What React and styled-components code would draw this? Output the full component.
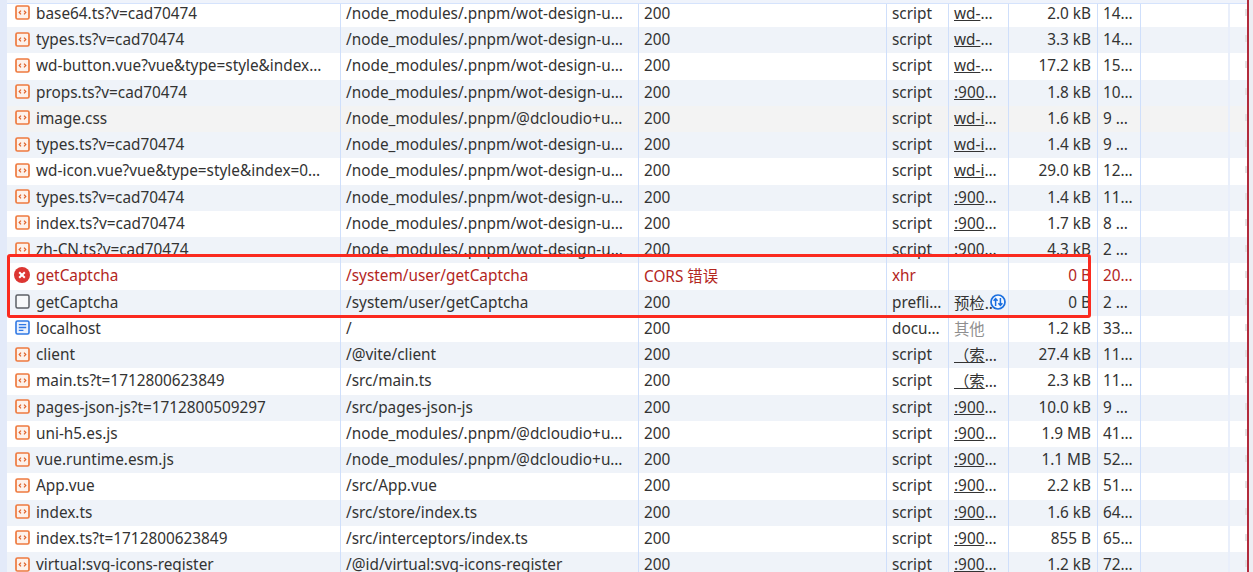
import React from "react";
import styled, { createGlobalStyle } from "styled-components";

const Global = createGlobalStyle`
  html, body { margin: 0; padding: 0; background: #fff; height: 100%; overflow: hidden; }
  #root { height: 100%; }
`;

const Page = styled.div`
  position: relative;
  width: 1253px;
  height: 572px;
  overflow: hidden;
  display: flex;
  background: #ededf2;
  font-family: "Noto Sans", "Noto Sans CJK SC", sans-serif;
  font-size: 15.35px;
  color: #333;
`;
const LeftGutter = styled.div`
  flex: 0 0 7px;
  background: #e3eaf9;
`;
const Panel = styled.div`
  flex: 0 0 1240px;
  min-width: 0;
`;
const HeaderEdge = styled.div`
  position: relative;
  z-index: 1;
  height: 3px;
  margin-bottom: -3.25px;
  background: #eff3fb;
  border-bottom: 1px solid #d5e3fc;
`;
const Row = styled.div`
  display: grid;
  grid-template-columns: 334px 298px 248px 62px 60px 89px 43px 89px 17px;
  height: 26.25px;
  background: ${(p) => (p.$hover ? "#f3f3f3" : p.$stripe ? "#eff3f9" : "#fff")};
  color: ${(p) => (p.$error ? "#b3261e" : "#333")};
`;
const Cell = styled.div`
  position: relative;
  display: flex;
  align-items: center;
  justify-content: ${(p) => (p.$right ? "flex-end" : "flex-start")};
  padding: 0 ${(p) => (p.$right ? "6px" : "3px")} 2px 5px;
  border-right: 1px solid #cfdffb;
  white-space: nowrap;
  overflow: hidden;
  min-width: 0;
`;
const NameCell = styled(Cell)`
  padding-left: 8px;
  gap: 6px;
`;
const Waterfall = styled.div`
  border-right: 2px solid #e9effb;
`;
const EdgeCell = styled.div`
  position: relative;
  &::after {
    content: "";
    position: absolute;
    right: 0;
    top: 8px;
    width: 2px;
    height: 7px;
    background: #e2e2e4;
  }
`;
const RedEdge = styled.div`
  flex: 0 0 2px;
  background: #b32b3c;
`;
const Link = styled.span`
  text-decoration: underline;
`;
const Muted = styled.span`
  color: #8f8f8f;
`;
const InitiatorIcon = styled.svg`
  position: absolute;
  left: 41px;
  top: 4px;
`;
const Highlight = styled.div`
  position: absolute;
  left: 7px;
  top: 254px;
  width: 1084px;
  height: 64px;
  box-sizing: border-box;
  border: 3px solid #fb2a1f;
  border-radius: 3px;
  pointer-events: none;
  z-index: 2;
`;

const ScriptIcon = () => (
  <svg width="15" height="15" viewBox="0 0 15 15" style={{ flex: "none" }}>
    <rect x="1" y="1" width="13" height="13" rx="1.5" fill="#fdf1ea" stroke="#ee7a3f" strokeWidth="1.7" />
    <path d="M6 5.6 4.2 7.5 6 9.4M9 5.6l1.8 1.9L9 9.4" fill="none" stroke="#e0622a" strokeWidth="1.2" />
  </svg>
);
const DocIcon = () => (
  <svg width="15" height="15" viewBox="0 0 15 15" style={{ flex: "none" }}>
    <rect x="1" y="1" width="13" height="13" rx="1.5" fill="#eaf1fe" stroke="#2f78e4" strokeWidth="1.6" />
    <path d="M3.8 4.6h7.4M3.8 7.5h7.4M3.8 10.4h4.6" stroke="#2f78e4" strokeWidth="1.4" />
  </svg>
);
const ErrorIcon = () => (
  <svg width="16" height="16" viewBox="0 0 16 16" style={{ flex: "none", marginLeft: -1, marginRight: 0 }}>
    <circle cx="8" cy="8" r="8" fill="#dc3632" />
    <path d="M5.2 5.2l5.6 5.6M10.8 5.2l-5.6 5.6" stroke="#fff" strokeWidth="2" />
  </svg>
);
const BoxIcon = () => (
  <svg width="15" height="15" viewBox="0 0 15 15" style={{ flex: "none" }}>
    <rect x="1" y="1" width="13" height="13" rx="1.5" fill="#f7f8fa" stroke="#5c5f66" strokeWidth="1.5" />
  </svg>
);
const PreflightIcon = () => (
  <InitiatorIcon width="16" height="16" viewBox="0 0 16 16">
    <circle cx="8" cy="8" r="7" fill="#f4f8ff" stroke="#1a6fe0" strokeWidth="1.7" />
    <path d="M5.6 12V5M3.6 6.8l2-2.2 2 2.2M10.4 4v7M8.4 9.2l2 2.2 2-2.2" fill="none" stroke="#1a6fe0" strokeWidth="1.5" />
  </InitiatorIcon>
);

const wot = "/node_modules/.pnpm/wot-design-u…";
const dc = "/node_modules/.pnpm/@dcloudio+u…";
const w = { l: "wd-" };
const wi = { l: "wd-i" };
const p = { l: ":900" };
const q = { l: "（索" };

const rows = [
  ["base64.ts?v=cad70474", wot, "200", "script", w, "2.0 kB", "14…"],
  ["types.ts?v=cad70474", wot, "200", "script", w, "3.3 kB", "14…"],
  ["wd-button.vue?vue&type=style&index…", wot, "200", "script", w, "17.2 kB", "15…"],
  ["props.ts?v=cad70474", wot, "200", "script", p, "1.8 kB", "10…"],
  ["image.css", dc, "200", "script", wi, "1.6 kB", "9 …"],
  ["types.ts?v=cad70474", wot, "200", "script", wi, "1.4 kB", "9 …"],
  ["wd-icon.vue?vue&type=style&index=0…", wot, "200", "script", wi, "29.0 kB", "12…"],
  ["types.ts?v=cad70474", wot, "200", "script", p, "1.4 kB", "11…"],
  ["index.ts?v=cad70474", wot, "200", "script", p, "1.7 kB", "8 …"],
  ["zh-CN.ts?v=cad70474", wot, "200", "script", p, "4.3 kB", "2 …"],
  ["getCaptcha", "/system/user/getCaptcha", "CORS 错误", "xhr", null, "0 B", "20…", "error"],
  ["getCaptcha", "/system/user/getCaptcha", "200", "prefli…", "preflight", "0 B", "2 …", "box"],
  ["localhost", "/", "200", "docu…", "other", "1.2 kB", "33…", "doc"],
  ["client", "/@vite/client", "200", "script", q, "27.4 kB", "11…"],
  ["main.ts?t=1712800623849", "/src/main.ts", "200", "script", q, "2.3 kB", "11…"],
  ["pages-json-js?t=1712800509297", "/src/pages-json-js", "200", "script", p, "10.0 kB", "9 …"],
  ["uni-h5.es.js", dc, "200", "script", p, "1.9 MB", "41…"],
  ["vue.runtime.esm.js", dc, "200", "script", p, "1.1 MB", "52…"],
  ["App.vue", "/src/App.vue", "200", "script", p, "2.2 kB", "51…"],
  ["index.ts", "/src/store/index.ts", "200", "script", p, "1.6 kB", "64…"],
  ["index.ts?t=1712800623849", "/src/interceptors/index.ts", "200", "script", p, "855 B", "65…"],
  ["virtual:svg-icons-register", "/@id/virtual:svg-icons-register", "200", "script", p, "1.2 kB", "72…"],
];

const icons = { error: ErrorIcon, box: BoxIcon, doc: DocIcon };

function Initiator({ value }) {
  if (!value) return null;
  if (value === "other") return <Muted>其他</Muted>;
  if (value === "preflight")
    return (
      <>
        <span>预检…</span>
        <PreflightIcon />
      </>
    );
  return (
    <span>
      <Link>{value.l}</Link>…
    </span>
  );
}

export default function App() {
  return (
    <>
      <Global />
      <Page>
        <LeftGutter />
        <Panel>
          <HeaderEdge />
          {rows.map((r, i) => {
            const Icon = icons[r[7]] || ScriptIcon;
            return (
              <Row key={i} $stripe={i % 2 === 1} $hover={i === 4} $error={r[7] === "error"}>
                <NameCell>
                  <Icon />
                  <span>{r[0]}</span>
                </NameCell>
                <Cell>{r[1]}</Cell>
                <Cell>{r[2]}</Cell>
                <Cell>{r[3]}</Cell>
                <Cell>
                  <Initiator value={r[4]} />
                </Cell>
                <Cell $right>{r[5]}</Cell>
                <Cell>{r[6]}</Cell>
                <Waterfall />
                <EdgeCell />
              </Row>
            );
          })}
        </Panel>
        <RedEdge />
        <Highlight />
      </Page>
    </>
  );
}
